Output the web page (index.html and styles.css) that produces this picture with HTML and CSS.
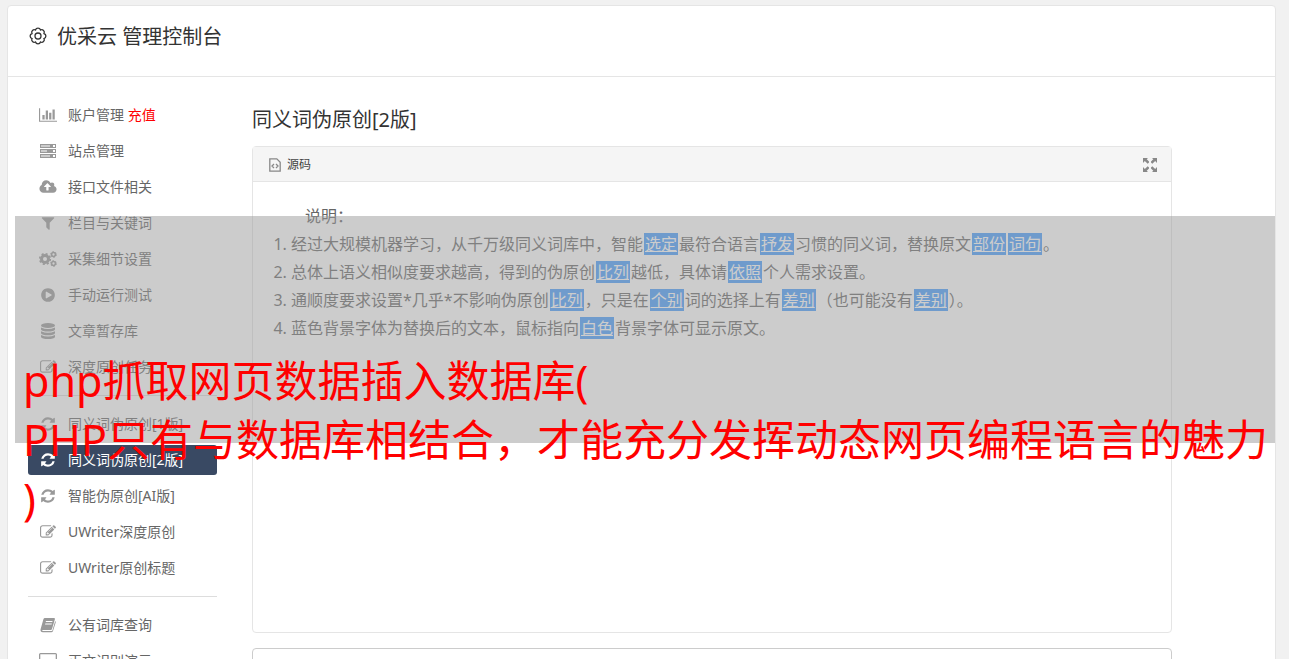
FILE: index.html
```html
<!DOCTYPE html>
<html lang="zh-CN">
<head>
    <meta charset="UTF-8">
    <meta name="viewport" content="width=device-width, initial-scale=1.0">
    <title>优采云 管理控制台</title>
    <link rel="stylesheet" href="styles.css">
</head>
<body>
    <!-- shared icons -->
    <svg class="sprite" aria-hidden="true">
        <symbol id="i-refresh" viewBox="0 0 1792 1792"><path d="M1639 1056q0 5-1 7-64 268-268 434.500t-478 166.500q-146 0-282.500-55t-243.500-157l-129 129q-19 19-45 19t-45-19-19-45v-448q0-26 19-45t45-19h448q26 0 45 19t19 45-19 45l-137 137q71 66 161 102t187 36q134 0 250-65t186-179q11-17 53-117 8-23 30-23h192q13 0 22.500 9.500t9.500 22.500zm25-800v448q0 26-19 45t-45 19h-448q-26 0-45-19t-19-45 19-45l138-138q-148-137-349-137-134 0-250 65t-186 179q-11 17-53 117-8 23-30 23h-199q-13 0-22.500-9.500t-9.500-22.500v-7q65-268 270-434.500t480-166.500q146 0 284 55.500t245 156.500l130-129q19-19 45-19t45 19 19 45z"/></symbol>
        <symbol id="i-edit" viewBox="0 0 1792 1792"><path d="M888 1184l116-116-152-152-116 116v56h96v96h56zm440-720q-16-16-33 1l-350 350q-17 17-1 33t33-1l350-350q17-17 1-33zm80 594v190q0 119-84.500 203.500t-203.500 84.500h-832q-119 0-203.500-84.500t-84.500-203.500v-832q0-119 84.500-203.500t203.500-84.500h832q63 0 117 25 15 7 18 23 3 17-9 29l-49 49q-14 14-32 8-23-6-45-6h-832q-66 0-113 47t-47 113v832q0 66 47 113t113 47h832q66 0 113-47t47-113v-126q0-13 9-22l64-64q15-15 35-7t20 29zm-96-738l288 288-672 672h-288v-288zm444 132l-92 92-288-288 92-92q28-28 68-28t68 28l152 152q28 28 28 68t-28 68z"/></symbol>
    </svg>

    <div class="card">
        <header class="card-header">
            <svg class="gear" viewBox="-10 -10 20 20"><path d="M6 2.500A2.600 2.600 0 0 1 2.500 6A2.600 2.600 0 0 1-2.500 6A2.600 2.600 0 0 1-6 2.500A2.600 2.600 0 0 1-6-2.500A2.600 2.600 0 0 1-2.500-6A2.600 2.600 0 0 1 2.500-6A2.600 2.600 0 0 1 6-2.500A2.600 2.600 0 0 1 6 2.500Z"/><circle r="3"/></svg>
            <h1>优采云 管理控制台</h1>
        </header>

        <div class="card-body">
            <nav class="sidebar">
                <a href="#"><svg class="icon wide" viewBox="0 0 2048 1792"><path d="M640 896v512h-256v-512h256zm384-512v1024h-256v-1024h256zm1024 1152v128h-2048v-1536h128v1408h1920zm-640-896v768h-256v-768h256zm384-384v1152h-256v-1152h256z"/></svg><span>账户管理 <em>充值</em></span></a>
                <a href="#"><svg class="icon" viewBox="0 0 16 16"><path fill-rule="evenodd" d="M0 1h16v4H0zM1 2.500v1h9v-1zM13 2v2h2V2zM0 6h16v4H0zM1 7.500v1h6v-1zM13 7v2h2V7zM0 11h16v4H0zM1 12.500v1h9v-1zM13 12v2h2v-2z"/></svg><span>站点管理</span></a>
                <a href="#"><svg class="icon wide" viewBox="0 0 1920 1792"><path fill-rule="evenodd" d="M1280 864q0-14-9-23l-352-352q-9-9-23-9t-23 9l-351 351q-10 12-10 24 0 14 9 23t23 9h224v352q0 13 9.500 22.500t22.500 9.500h192q13 0 22.500-9.500t9.500-22.500v-352h224q13 0 22.500-9.500t9.500-22.500zm640 288q0 159-112.500 271.500t-271.500 112.500h-1088q-185 0-316.500-131.500t-131.500-316.500q0-130 70-240t188-165q-2-30-2-43 0-212 150-362t362-150q156 0 285.500 87t188.500 231q71-62 166-62 106 0 181 75t75 181q0 76-41 138 130 31 213.500 135.500t83.500 238.500z"/></svg><span>接口文件相关</span></a>
                <a href="#"><svg class="icon" viewBox="0 0 1792 1792"><path d="M1595 295q17 41-14 70l-493 493v742q0 42-39 59-13 5-25 5-27 0-45-19l-256-256q-19-19-19-45v-486l-493-493q-31-29-14-70 17-39 59-39h1280q42 0 59 39z"/></svg><span>栏目与关键词</span></a>
                <a href="#"><svg class="icon wide cogs" viewBox="0 0 18 16"><circle cx="6" cy="8" r="3.500" stroke-width="3"/><circle cx="6" cy="8" r="5.300" stroke-width="1.600" stroke-dasharray="2.080 2.080"/><circle cx="14.500" cy="3.500" r="1.900" stroke-width="1.500"/><circle cx="14.500" cy="3.500" r="2.900" stroke-width="1" stroke-dasharray="1.520 1.520"/><circle cx="14.500" cy="12.500" r="1.900" stroke-width="1.500"/><circle cx="14.500" cy="12.500" r="2.900" stroke-width="1" stroke-dasharray="1.520 1.520"/></svg><span>采集细节设置</span></a>
                <a href="#"><svg class="icon" viewBox="0 0 1792 1792"><path fill-rule="evenodd" d="M896 128q209 0 385.500 103t279.500 279.500 103 385.500-103 385.500-279.500 279.500-385.500 103-385.500-103-279.500-279.500-103-385.500 103-385.500 279.500-279.500 385.500-103zm384 823q32-18 32-55t-32-55l-544-320q-31-19-64-1-32 19-32 56v640q0 37 32 56 16 8 32 8 17 0 32-9z"/></svg><span>手动运行测试</span></a>
                <a href="#"><svg class="icon" viewBox="0 0 16 16"><ellipse cx="8" cy="2.500" rx="7" ry="2.500"/><path d="M1 4.500q7 3 14 0v2q-1 2-7 2t-7-2zM1 8.200q7 3 14 0v2q-1 2-7 2t-7-2zM1 12q7 3 14 0v2q-1 2-7 2t-7-2z"/></svg><span>文章暂存库</span></a>
                <a href="#"><svg class="icon"><use href="#i-edit"/></svg><span>深度原创任务</span></a>
                <hr>
                <a href="#"><svg class="icon"><use href="#i-refresh"/></svg><span>同义词伪原创[1版]</span></a>
                <a href="#" class="active"><svg class="icon"><use href="#i-refresh"/></svg><span>同义词伪原创[2版]</span></a>
                <a href="#"><svg class="icon"><use href="#i-refresh"/></svg><span>智能伪原创[AI版]</span></a>
                <a href="#"><svg class="icon"><use href="#i-edit"/></svg><span>UWriter深度原创</span></a>
                <a href="#"><svg class="icon"><use href="#i-edit"/></svg><span>UWriter原创标题</span></a>
                <hr>
                <a href="#"><svg class="icon" viewBox="0 0 16 16"><path fill-rule="evenodd" d="M5 1h9q1.200 0 .9 1.200L12 12q-.3 1-1.300 1H3q-1 0-1 .6 0 .4 1 .4h8.600q.6 0 .8-.6L15.200 4q.8.500.5 1.500L13 14q-.4 1.200-1.700 1.200H2.800Q.3 15.200.5 12.500L3.400 2.300Q3.800 1 5 1zM6 4l-.3 1h6.600l.3-1zM5.300 6.500l-.3 1h6.600l.3-1z"/></svg><span>公有词库查询</span></a>
                <a href="#"><svg class="icon wide" viewBox="0 0 18 16"><path fill-rule="evenodd" d="M1.500 0h15Q18 0 18 1.500v10q0 1.500-1.500 1.500H11v2h2v1H5v-1h2v-2H1.500Q0 13 0 11.500v-10Q0 0 1.500 0zM1.300 1.300v8.700h15.400V1.300z"/></svg><span>正文识别演示</span></a>
            </nav>

            <main class="content">
                <h2>同义词伪原创[2版]</h2>
                <section class="editor">
                    <div class="toolbar">
                        <button type="button" class="source-btn">
                            <svg class="source-icon" viewBox="0 0 12 14"><path d="M.8.800h7l3.400 3.400v9H.800zM5 6L3 8l2 2M7 6l2 2-2 2"/></svg>
                            <span>源码</span>
                        </button>
                        <button type="button" class="full-btn" aria-label="全屏">
                            <svg viewBox="0 0 14 14"><path d="M0 0h5L3.700 1.300 6 3.600V4.500L4.700 5.800 1.800 3 0 5zM14 0v5l-1.800-2L9.300 5.800 8 4.500v-.9l2.300-2.300L9 0zM0 14V9l1.800 2 2.900-2.800L6 9.500v.9l-2.300 2.300L5 14zM14 14H9l1.300-1.300L8 10.400v-.9l1.300-1.300L12.200 11 14 9z"/></svg>
                        </button>
                    </div>
                    <div class="editor-body">
                        <p>说明：</p>
                        <ol>
                            <li>经过大规模机器学习，从千万级同义词库中，智能<u>选定</u>最符合语言<u>抒发</u>习惯的同义词，替换原文<u>部份</u><u>词句</u>。</li>
                            <li>总体上语义相似度要求越高，得到的伪原创<u>比列</u>越低，具体请<u>依照</u>个人需求设置。</li>
                            <li>通顺度要求设置*几乎*不影响伪原创<u>比列</u>，只是在<u>个别</u>词的选择上有<u>差别</u>（也可能没有<u>差别</u>）。</li>
                            <li>蓝色背景字体为替换后的文本，鼠标指向<u>白色</u>背景字体可显示原文。</li>
                        </ol>
                    </div>
                </section>
                <section class="result"></section>
            </main>
        </div>
    </div>

    <div class="caption">php抓取网页数据插入数据库(<br>PHP只有与数据库相结合，才能充分发挥动态网页编程语言的魅力<br>)</div>
</body>
</html>
```
FILE: styles.css
```css
* {
    box-sizing: border-box;
}

body {
    margin: 0;
    padding: 5px 13px 0 7px;
    height: 100vh;
    overflow: hidden;
    position: relative;
    background-color: #f1f1f1;
    font-family: "Noto Sans", "Noto Sans CJK SC", sans-serif;
    font-size: 14px;
    color: #666;
}

.sprite {
    position: absolute;
    width: 0;
    height: 0;
}

.card {
    background-color: #fff;
    border: 1px solid #e5e5e5;
    border-radius: 4px;
}

.card-header {
    display: flex;
    align-items: flex-start;
    gap: 9px;
    height: 71px;
    padding: 17px 20px 0;
    border-bottom: 1px solid #e5e5e5;
}

h1, h2 {
    margin: 0;
    font-size: 20px;
    font-weight: 400;
    line-height: 28px;
    color: #333;
}

.gear {
    width: 20px;
    height: 20px;
    margin-top: 3px;
    fill: none;
    stroke: #333;
    stroke-width: 1.3;
}

.card-body {
    display: flex;
    gap: 35px;
    padding: 23px 103px 20px 20px;
}

/* sidebar */
.sidebar {
    display: flex;
    flex-direction: column;
    flex: 0 0 189px;
    gap: 6px;
}

.sidebar a {
    display: flex;
    align-items: center;
    gap: 10px;
    height: 30px;
    padding: 0 10px;
    border-radius: 3px;
    color: #666;
    text-decoration: none;
}

.sidebar span {
    padding-bottom: 2px;
}

.sidebar em {
    font-style: normal;
    color: #f00;
}

.sidebar .active {
    background-color: #394963;
    color: #fff;
}

.sidebar hr {
    width: 100%;
    margin: 7px 0;
    border: 0;
    border-top: 1px solid #ddd;
}

.icon {
    width: 16px;
    height: 16px;
    margin: 0 2px;
    fill: #999;
}

.icon.wide {
    width: 18px;
    margin: 0 1px;
}

.active .icon {
    fill: #fff;
}

.cogs {
    fill: none;
    stroke: #999;
}

/* editor */
.content {
    flex: 1;
    min-width: 0;
    padding-top: 6px;
}

.editor {
    height: 487px;
    margin-top: 12px;
    border: 1px solid #e5e5e5;
    border-radius: 4px;
}

.toolbar {
    display: flex;
    align-items: center;
    justify-content: space-between;
    height: 35px;
    padding: 2px 14px 0 16px;
    background-color: #f5f5f5;
    border-bottom: 1px solid #e5e5e5;
}

.toolbar button {
    display: flex;
    align-items: center;
    gap: 6px;
    padding: 0;
    border: 0;
    background: none;
    font-family: inherit;
    font-size: 12px;
    color: #444;
}

.toolbar span {
    padding-bottom: 2px;
}

.source-icon {
    width: 12px;
    height: 14px;
    fill: none;
    stroke: #888;
    stroke-width: 1.3;
}

.full-btn svg {
    width: 14px;
    height: 14px;
    fill: #888;
}

.editor-body {
    padding: 20px;
    font-size: 16px;
    line-height: 28px;
}

.editor-body p {
    margin: 0;
    text-indent: 2em;
}

.editor-body ol {
    margin: 0;
    padding-left: 18px;
}

.editor-body u {
    margin: 0 1px;
    padding: 0 1px;
    background-color: #459dff;
    color: #fff;
}

.result {
    height: 200px;
    margin-top: 15px;
    border: 1px solid #ccc;
    border-radius: 4px;
}

/* red caption laid over the console */
.caption {
    position: absolute;
    top: 216px;
    left: 15px;
    right: 14px;
    height: 227px;
    padding: 135px 0 0 8px;
    background-color: rgba(153, 153, 153, 0.5);
    color: #f00;
    font-size: 43px;
    line-height: 59px;
    white-space: nowrap;
}
```
